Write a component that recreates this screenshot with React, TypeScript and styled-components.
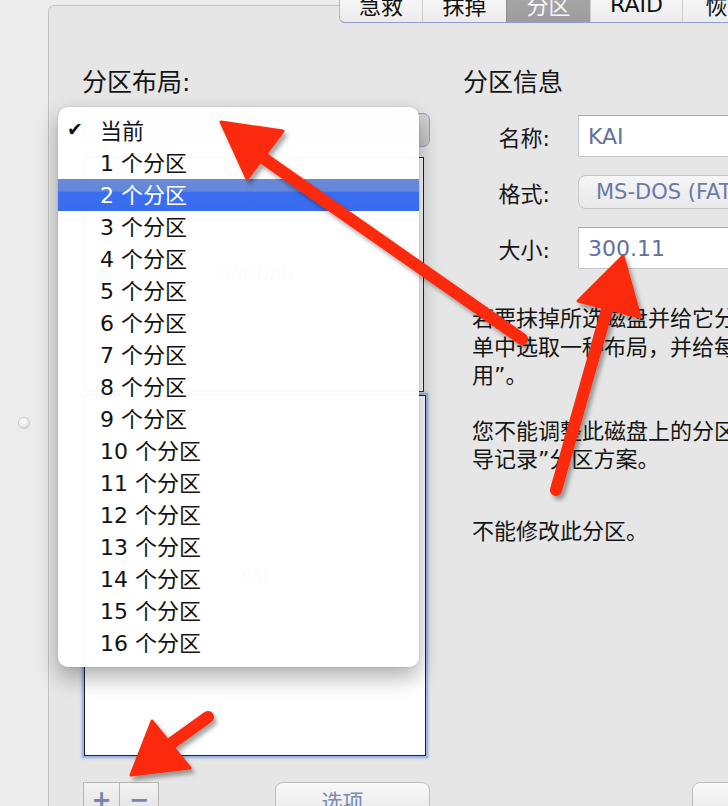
import React from "react";
import styled, { createGlobalStyle } from "styled-components";

const FONT = `"DejaVu Sans", "Noto Sans CJK SC", sans-serif`;

const GlobalStyle = createGlobalStyle`
  html, body { margin: 0; padding: 0; background: #ececec; overflow: hidden; }
  body { font-family: ${FONT}; color: #151515; }
  * { box-sizing: border-box; }
`;

const Window = styled.div`
  position: relative;
  width: 728px;
  height: 806px;
  overflow: hidden;
  display: flex;
  align-items: flex-start;
  background: #ececec;
`;

const Gutter = styled.div`
  width: 48px;
  flex: none;
  display: flex;
  justify-content: center;
  padding-top: 418px;
`;

const SplitDot = styled.div`
  width: 10px;
  height: 10px;
  border-radius: 50%;
  background: radial-gradient(circle at 40% 35%, #ffffff 0%, #ececec 50%, #bcbcbc 100%);
  box-shadow: 0 0 0 1px #cacaca;
`;

const Panel = styled.section`
  flex: none;
  width: 720px;
  min-height: 820px;
  margin-top: 5px;
  background: #e6e6e6;
  border: 1px solid #c4c4c4;
  border-right: none;
  border-bottom: none;
  border-top-left-radius: 6px;
  display: flex;
  flex-direction: column;
`;

const TabRow = styled.div`
  flex: none;
  display: flex;
  height: 34px;
  margin: -17px 0 0 290px;
  border-bottom: 1px solid #8d9dcc;
  border-left: 1px solid #b8b8b8;
  border-bottom-left-radius: 6px;
  overflow: hidden;
  background: linear-gradient(#fafafa, #ececec);
`;

const Tab = styled.div<{ $w: number; $active?: boolean }>`
  flex: none;
  width: ${(p) => p.$w}px;
  display: flex;
  align-items: center;
  justify-content: center;
  font-size: 22px;
  padding-bottom: 3px;
  color: ${(p) => (p.$active ? "#f4f6ff" : "#111")};
  background: ${(p) => (p.$active ? "linear-gradient(#a9a9a9, #9c9c9c)" : "transparent")};
  border-left: 1px solid ${(p) => (p.$active ? "#8c8c8c" : "#cdcdcd")};
  &:first-child { border-left: none; }
`;

const Content = styled.div`
  flex: none;
  display: grid;
  grid-template-columns: 349px 1fr;
  column-gap: 32px;
  padding: 45px 0 0 33px;
`;

const Column = styled.div`
  display: flex;
  flex-direction: column;
  min-width: 0;
`;

const SectionTitle = styled.h2`
  margin: 0;
  font-size: 25px;
  line-height: 30px;
  font-weight: normal;
  color: #151515;
  white-space: nowrap;
`;

const PopupWrap = styled.div`
  position: relative;
  margin-top: 15px;
  height: 34px;
  width: 348px;
  border-radius: 7px;
  border: 1px solid #8e9fd0;
  background: linear-gradient(#d6d6d6, #c6c6c6);
`;

const Menu = styled.ul`
  position: absolute;
  left: -25px;
  top: -7px;
  width: 361px;
  margin: 0;
  padding: 8px 0;
  list-style: none;
  background: rgba(255, 255, 255, 0.975);
  border-radius: 10px;
  box-shadow: 0 10px 22px rgba(0, 0, 0, 0.32), 0 0 0 1px rgba(0, 0, 0, 0.06);
  z-index: 5;
`;

const MenuItem = styled.li<{ $selected?: boolean }>`
  display: flex;
  align-items: center;
  height: 32px;
  padding-bottom: 5px;
  font-size: 22px;
  color: ${(p) => (p.$selected ? "#ffffff" : "#131313")};
  background: ${(p) =>
    p.$selected
      ? "linear-gradient(#6b8ad6 0%, #6286da 38%, #3b6def 42%, #386cf0 100%)"
      : "transparent"};
`;

const CheckCol = styled.span`
  width: 42px;
  flex: none;
  padding-left: 9px;
  font-size: 19px;
  color: #111;
`;

const Map = styled.div`
  margin-top: 10px;
  width: 346px;
  height: 601px;
  display: flex;
  flex-direction: column;
`;

const Partition = styled.div<{ $selected?: boolean }>`
  background: #fff;
  border: 1px solid #222;
  display: flex;
  align-items: center;
  justify-content: center;
  ${(p) =>
    p.$selected
      ? `flex: 1; margin: 3px 2px 2px 2px; box-shadow: 0 0 0 2px #9db6e7, 0 0 2px 3px rgba(140,170,225,0.45);`
      : `height: 235px; margin: 0 4px 0 2px;`}
`;

const PartLabel = styled.span`
  font-size: 16px;
  color: #3a3a3a;
  letter-spacing: 1px;
`;

const BottomRow = styled.div`
  display: flex;
  margin-top: 24px;
  padding-left: 1px;
`;

const SegGroup = styled.div`
  display: flex;
  height: 36px;
`;

const SegButton = styled.div<{ $w: number }>`
  width: ${(p) => p.$w}px;
  display: flex;
  align-items: center;
  justify-content: center;
  font-size: 24px;
  font-weight: bold;
  color: #7785ad;
  background: linear-gradient(#f2f2f2, #e2e2e2);
  border: 1px solid #b6b6b6;
  & + & { border-left: none; }
`;

const PushButton = styled.div<{ $ml: number; $w: number }>`
  margin-left: ${(p) => p.$ml}px;
  width: ${(p) => p.$w}px;
  height: 36px;
  flex: none;
  display: flex;
  align-items: center;
  justify-content: center;
  font-size: 21px;
  color: #7c89b0;
  border: 1px solid #bdbdbd;
  border-radius: 8px;
  background: linear-gradient(#f9f9f9, #e8e8e8);
  white-space: nowrap;
`;

const FormGrid = styled.div`
  margin-top: 17px;
  display: grid;
  grid-template-columns: 87px 1fr;
  column-gap: 28px;
  row-gap: 18px;
  align-items: center;
`;

const FieldLabel = styled.label`
  justify-self: end;
  font-size: 22px;
  color: #151515;
  white-space: nowrap;
`;

const TextField = styled.div`
  height: 42px;
  width: 220px;
  background: #fff;
  border: 1px solid #c4c4c4;
  border-top-color: #a9a9a9;
  display: flex;
  align-items: center;
  padding-left: 9px;
  font-size: 22px;
  color: #6171a0;
  white-space: nowrap;
`;

const SelectField = styled.div`
  height: 34px;
  width: 220px;
  border: 1px solid #c6c6c6;
  border-radius: 8px;
  background: linear-gradient(#f6f6f6, #e8e8e8);
  display: flex;
  align-items: center;
  padding-left: 17px;
  font-size: 21px;
  color: #6a79a7;
  white-space: nowrap;
`;

const Para = styled.p<{ $mt: number }>`
  margin: ${(p) => p.$mt}px 0 0 9px;
  font-size: 22px;
  line-height: 28.5px;
  color: #151515;
  white-space: nowrap;
`;

const BottomRight = styled.div`
  margin-top: auto;
  display: flex;
`;

const Annotations = styled.svg`
  position: absolute;
  left: 0;
  top: 0;
  width: 728px;
  height: 806px;
  pointer-events: none;
  z-index: 20;
`;

const RED = "#fb2a0a";

const Arrow: React.FC<{ shaft: string; head: string }> = ({ shaft, head }) => (
  <g filter="url(#arrowShadow)">
    <path d={shaft} stroke={RED} strokeWidth={12} strokeLinecap="round" fill="none" />
    <path d={head} fill={RED} stroke={RED} strokeWidth={3} strokeLinejoin="round" />
  </g>
);

const items = Array.from({ length: 16 }, (_, i) => `${i + 1} 个分区`);

export default function App() {
  return (
    <>
      <GlobalStyle />
      <Window>
        <Gutter>
          <SplitDot />
        </Gutter>
        <Panel>
          <TabRow>
            <Tab $w={82}>急救</Tab>
            <Tab $w={84}>抹掉</Tab>
            <Tab $w={84} $active>分区</Tab>
            <Tab $w={92}>RAID</Tab>
            <Tab $w={90}>恢复</Tab>
          </TabRow>
          <Content>
            <Column>
              <SectionTitle>分区布局:</SectionTitle>
              <PopupWrap>
                <Menu>
                  <MenuItem>
                    <CheckCol>✔</CheckCol>当前
                  </MenuItem>
                  {items.map((t, i) => (
                    <MenuItem key={t} $selected={i === 1}>
                      <CheckCol />
                      {t}
                    </MenuItem>
                  ))}
                </Menu>
              </PopupWrap>
              <Map>
                <Partition>
                  <PartLabel>XIAONAN</PartLabel>
                </Partition>
                <Partition $selected>
                  <PartLabel>KAI</PartLabel>
                </Partition>
              </Map>
              <BottomRow>
                <SegGroup>
                  <SegButton $w={37}>+</SegButton>
                  <SegButton $w={39}>−</SegButton>
                </SegGroup>
                <PushButton $ml={116} $w={155}>选项...</PushButton>
              </BottomRow>
            </Column>
            <Column>
              <SectionTitle>分区信息</SectionTitle>
              <FormGrid>
                <FieldLabel>名称:</FieldLabel>
                <TextField>KAI</TextField>
                <FieldLabel>格式:</FieldLabel>
                <SelectField>MS-DOS (FAT32)</SelectField>
                <FieldLabel>大小:</FieldLabel>
                <TextField>300.11</TextField>
              </FormGrid>
              <Para $mt={36}>
                若要抹掉所选磁盘并给它分区，请从“分区布局”弹出式菜
                <br />
                单中选取一种布局，并给每个分区设定选项，然后点按“应
                <br />
                用”。
              </Para>
              <Para $mt={27}>
                您不能调整此磁盘上的分区大小，因为它使用“主引
                <br />
                导记录”分区方案。
              </Para>
              <Para $mt={43}>不能修改此分区。</Para>
              <BottomRight>
                <PushButton $ml={229} $w={150}>还原</PushButton>
              </BottomRight>
            </Column>
          </Content>
        </Panel>
        <Annotations viewBox="0 0 728 806">
          <defs>
            <filter id="arrowShadow" x="-20%" y="-20%" width="140%" height="140%">
              <feDropShadow dx="3" dy="4" stdDeviation="2" floodColor="#000" floodOpacity="0.35" />
            </filter>
          </defs>
          <Arrow shaft="M256 153 L522 339" head="M221 122 L283 131 L247 179 Z" />
          <Arrow shaft="M614 285 L556 490" head="M623 256 L578 301 L640 317 Z" />
          <Arrow shaft="M162 750 L208 717" head="M131 775 L152 721 L190 768 Z" />
        </Annotations>
      </Window>
    </>
  );
}
